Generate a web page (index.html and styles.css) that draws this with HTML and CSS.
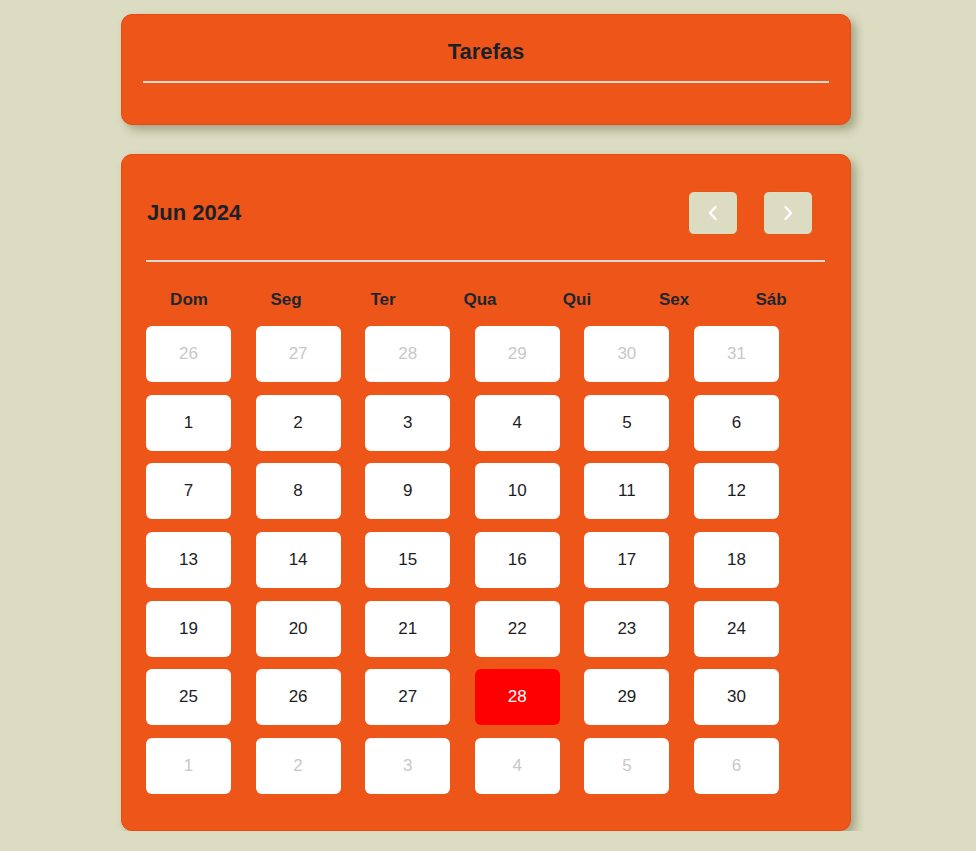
FILE: index.html
```html
<!DOCTYPE html>
<html lang="pt-BR">
<head>
<meta charset="utf-8">
<title>Tarefas</title>
<link rel="stylesheet" href="styles.css">
</head>
<body>
<main class="page">
  <section class="card tasks">
    <h2 class="tasks-title">Tarefas</h2>
    <div class="rule"></div>
  </section>

  <section class="card calendar">
    <div class="cal-head">
      <h2 class="cal-title">Jun 2024</h2>
      <div class="nav">
        <button class="nav-btn" aria-label="Anterior">
          <svg width="12" height="16" viewBox="0 0 12 16"><path d="M8.5 2 L3 8 L8.5 14" fill="none" stroke="#fff" stroke-width="2.4" stroke-linecap="round" stroke-linejoin="round"/></svg>
        </button>
        <button class="nav-btn" aria-label="Próximo">
          <svg width="12" height="16" viewBox="0 0 12 16"><path d="M3.5 2 L9 8 L3.5 14" fill="none" stroke="#fff" stroke-width="2.4" stroke-linecap="round" stroke-linejoin="round"/></svg>
        </button>
      </div>
    </div>
    <div class="rule cal-rule"></div>
    <div class="weekdays">
      <span>Dom</span><span>Seg</span><span>Ter</span><span>Qua</span><span>Qui</span><span>Sex</span><span>Sáb</span>
    </div>
    <div class="days">
      <div class="day muted">26</div><div class="day muted">27</div><div class="day muted">28</div><div class="day muted">29</div><div class="day muted">30</div><div class="day muted">31</div>
      <div class="day">1</div><div class="day">2</div><div class="day">3</div><div class="day">4</div><div class="day">5</div><div class="day">6</div>
      <div class="day">7</div><div class="day">8</div><div class="day">9</div><div class="day">10</div><div class="day">11</div><div class="day">12</div>
      <div class="day">13</div><div class="day">14</div><div class="day">15</div><div class="day">16</div><div class="day">17</div><div class="day">18</div>
      <div class="day">19</div><div class="day">20</div><div class="day">21</div><div class="day">22</div><div class="day">23</div><div class="day">24</div>
      <div class="day">25</div><div class="day">26</div><div class="day">27</div><div class="day today">28</div><div class="day">29</div><div class="day">30</div>
      <div class="day muted">1</div><div class="day muted">2</div><div class="day muted">3</div><div class="day muted">4</div><div class="day muted">5</div><div class="day muted">6</div>
    </div>
  </section>
</main>
</body>
</html>
```

FILE: styles.css
```css
* { box-sizing: border-box; }

html, body {
  margin: 0;
  padding: 0;
  background: #dcdcc2;
  font-family: "Liberation Sans", Arial, sans-serif;
  color: #1c242c;
}

.page {
  width: 730px;
  margin-left: 121px;
  padding-top: 14px;
  display: flex;
  flex-direction: column;
  gap: 29px;
}

.card {
  background: #ee5619;
  border: 1px solid #e8470f;
  border-radius: 11px;
  box-shadow: 5px 5px 10px rgba(80, 80, 40, 0.4);
}

.tasks {
  padding: 24px 21px 41px 21px;
}

.tasks-title {
  margin: 0 0 16px 0;
  font-size: 22px;
  line-height: 26px;
  font-weight: bold;
  text-align: center;
  color: #1a2128;
}

.rule {
  height: 2px;
  background: #d9d9d3;
}

.calendar {
  padding: 36px 25px 36px 24px;
}

.cal-head {
  display: flex;
  align-items: center;
  justify-content: space-between;
  height: 44px;
}

.cal-title {
  margin: 0 0 0 1px;
  font-size: 22px;
  line-height: 26px;
  font-weight: bold;
  color: #1a2128;
}

.nav {
  display: flex;
  gap: 25px;
  margin-right: 12px;
}

.nav-btn {
  width: 50px;
  height: 44px;
  padding: 0;
  background: #dcdcc2;
  border: 1px solid #e5570f;
  border-radius: 6px;
  display: flex;
  align-items: center;
  justify-content: center;
}

.cal-rule {
  margin-top: 25px;
}

.weekdays {
  display: grid;
  grid-template-columns: repeat(7, 86px);
  column-gap: 11px;
  margin-top: 28px;
  height: 20px;
  line-height: 20px;
  font-size: 17px;
  font-weight: bold;
  color: #1c2630;
}

.weekdays span {
  text-align: center;
}

.days {
  display: grid;
  grid-template-columns: repeat(6, 85px);
  grid-auto-rows: 56px;
  column-gap: 24.6px;
  row-gap: 12.67px;
  margin-top: 16px;
}

.day {
  background: #fff;
  border-radius: 6px;
  display: flex;
  align-items: center;
  justify-content: center;
  font-size: 17px;
  color: #1c1c24;
}

.day.muted {
  color: #c8c8c8;
}

.day.today {
  background: #ff0000;
  color: #fff;
}
```
